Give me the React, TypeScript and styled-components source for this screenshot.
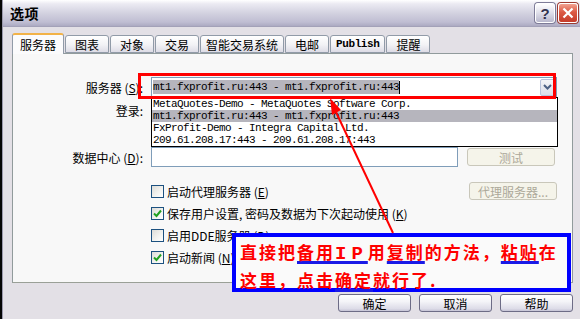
import React from 'react';
import styled, { createGlobalStyle } from 'styled-components';

const UI_FONT = `"Noto Sans CJK SC", "Liberation Sans", sans-serif`;
const MONO_FONT = `"Liberation Mono", "Noto Sans CJK SC", monospace`;

const GlobalStyle = createGlobalStyle`
  html, body {
    margin: 0;
    padding: 0;
    background: #050505;
  }
  body {
    width: 580px;
    height: 319px;
    overflow: hidden;
    font-family: ${UI_FONT};
    font-size: 12px;
    color: #000;
  }
  * { box-sizing: border-box; }
`;

const Stage = styled.div`
  position: relative;
  width: 580px;
  height: 319px;
  overflow: hidden;
`;

const Window = styled.div`
  margin-left: 2px;
  width: 578px;
  height: 319px;
  display: flex;
  flex-direction: column;
  background: #e3e0e6;
  border-left: 1px solid #9a98ac;
`;

const TitleBar = styled.div`
  height: 27px;
  flex-shrink: 0;
  display: flex;
  align-items: center;
  padding: 0 2px 0 7px;
  background: linear-gradient(180deg, #ffffff 0%, #ebeaf2 15%, #d3d2e0 50%, #bfbdd2 85%, #acaac2 100%);
  border-bottom: 1px solid #a3a1b8;
`;

const Title = styled.span`
  flex: 1;
  font-weight: 700;
  font-size: 14px;
  letter-spacing: 0.5px;
`;

const CaptionButton = styled.div<{ $close?: boolean }>`
  width: 20px;
  height: 20px;
  margin-left: 3px;
  border-radius: 3px;
  display: flex;
  align-items: center;
  justify-content: center;
  border: 1px solid #ffffff;
  box-shadow: 0 0 0 1px ${(p) => (p.$close ? '#9c3a30' : '#7e7c98')};
  background: ${(p) => (p.$close
    ? 'linear-gradient(180deg, #f2a291 0%, #dc5a44 45%, #c53b29 100%)'
    : 'linear-gradient(180deg, #ffffff 0%, #e2e2ec 45%, #b9b8cd 100%)')};
  color: #33334f;
  font: bold 15px "Liberation Sans", sans-serif;
`;

const Body = styled.div`
  flex: 1;
  display: flex;
  flex-direction: column;
  padding: 6px 7px 0 9px;
`;

const TabStrip = styled.div`
  height: 20px;
  display: flex;
  align-items: flex-end;
  gap: 1px;
`;

const Tab = styled.div<{ $active?: boolean; $latin?: boolean }>`
  position: relative;
  z-index: ${(p) => (p.$active ? 2 : 1)};
  min-width: 44px;
  height: ${(p) => (p.$active ? 21 : 18)}px;
  margin-bottom: ${(p) => (p.$active ? -1 : 0)}px;
  padding: 0 ${(p) => (p.$active ? 7 : 5)}px;
  display: flex;
  align-items: center;
  justify-content: center;
  font-family: ${(p) => (p.$latin ? MONO_FONT : UI_FONT)};
  font-size: ${(p) => (p.$latin ? 11 : 12)}px;
  letter-spacing: ${(p) => (p.$latin ? '-0.4px' : '0')};
  font-weight: ${(p) => (p.$latin ? 700 : 400)};
  border: 1px solid #919ba8;
  border-bottom: ${(p) => (p.$active ? 'none' : '1px solid #919ba8')};
  border-top: ${(p) => (p.$active ? '2px solid #f2b247' : '1px solid #919ba8')};
  border-radius: 3px 3px 0 0;
  background: ${(p) => (p.$active
    ? '#fbfbfc'
    : 'linear-gradient(180deg, #ffffff 0%, #f2f2f5 55%, #dddce6 100%)')};
`;

const Panel = styled.div`
  height: 230px;
  border: 1px solid #919b9c;
  border-bottom-color: #9aa097;
  background: #f8f8f8;
  padding: 23px 15px 0 0;
  display: flex;
  flex-direction: column;
`;

const FormRow = styled.div<{ $gap?: number }>`
  display: grid;
  grid-template-columns: 130px 1fr;
  column-gap: 8px;
  align-items: center;
  margin-top: ${(p) => p.$gap ?? 0}px;
  height: 20px;
`;

const Label = styled.span`
  text-align: right;
  white-space: nowrap;
`;

const ComboWrap = styled.div`
  position: relative;
`;

const Combo = styled.div`
  height: 20px;
  border: 1px solid #7f9db9;
  background: #fff;
  display: flex;
  align-items: center;
  padding: 0 1px 0 1px;
`;

const ComboText = styled.span`
  flex: 1;
  display: flex;
  align-items: center;
  font-family: ${MONO_FONT};
  font-size: 11px;
  letter-spacing: -0.6px;
  white-space: nowrap;
`;

const Selection = styled.span`
  background: #b6b5bd;
  padding: 1px 0;
`;

const Caret = styled.span`
  width: 1px;
  height: 13px;
  background: #000;
`;

const DropButton = styled.div`
  width: 15px;
  height: 17px;
  border: 1px solid #b9c3dc;
  border-radius: 2px;
  background: linear-gradient(180deg, #f4f4f8 0%, #dcdde8 100%);
  display: flex;
  align-items: center;
  justify-content: center;
`;

const DropList = styled.div`
  position: absolute;
  top: 20px;
  left: 0;
  right: -1px;
  z-index: 5;
  border: 1px solid #000;
  background: #fff;
  font-family: ${MONO_FONT};
  font-size: 11px;
  letter-spacing: -0.6px;
`;

const DropItem = styled.div<{ $selected?: boolean }>`
  height: 12px;
  line-height: 12px;
  padding-left: 1px;
  white-space: nowrap;
  background: ${(p) => (p.$selected ? '#b6b5bd' : 'transparent')};
`;

const FieldLine = styled.div`
  display: flex;
  align-items: center;
  gap: 9px;
`;

const Field = styled.div<{ $width?: number }>`
  width: ${(p) => p.$width ?? 307}px;
  height: 20px;
  border: 1px solid #7f9db9;
  background: #fff;
`;

const SysButton = styled.div<{ $disabled?: boolean }>`
  width: ${(p) => (p.$disabled ? 88 : 73)}px;
  height: 18px;
  display: flex;
  align-items: center;
  justify-content: center;
  border-radius: 3px;
  white-space: nowrap;
  border: 1px solid ${(p) => (p.$disabled ? '#c9c7ba' : '#6d6c86')};
  color: ${(p) => (p.$disabled ? '#aca899' : '#000')};
  background: ${(p) => (p.$disabled
    ? '#f5f4ea'
    : 'linear-gradient(180deg, #ffffff 0%, #f4f4f8 40%, #dddce8 85%, #c6c4d6 100%)')};
`;

const Checks = styled.div`
  margin-top: 13px;
  padding-left: 138px;
  display: flex;
  flex-direction: column;
`;

const CheckRow = styled.div`
  height: 22px;
  display: flex;
  align-items: center;
  white-space: nowrap;
`;

const Box = styled.span`
  width: 13px;
  height: 13px;
  margin-right: 3px;
  flex-shrink: 0;
  border: 1px solid #1c5180;
  background: linear-gradient(135deg, #dcdcd7 0%, #f4f4f1 60%, #ffffff 100%);
  display: flex;
  align-items: center;
  justify-content: center;
`;

const Spacer = styled.span`
  flex: 1;
`;

const ButtonRow = styled.div`
  display: flex;
  justify-content: flex-end;
  gap: 8px;
  margin-top: 11px;
`;

const RedFrame = styled.div`
  position: absolute;
  left: 138px;
  top: 73px;
  width: 418px;
  height: 26px;
  border: 3px solid #ff0000;
  z-index: 6;
  pointer-events: none;
`;

const Callout = styled.div`
  position: absolute;
  left: 232px;
  top: 233px;
  width: 339px;
  height: 59px;
  z-index: 7;
  border: 4px solid #0000ff;
  background: #fafafa;
  padding: 2px 0 0 4px;
  color: #ff0000;
  font-family: ${UI_FONT};
  font-weight: 700;
  font-size: 17px;
  letter-spacing: 2px;
  line-height: 25px;
  white-space: nowrap;
`;

const Mark = styled.span`
  text-decoration: underline;
  text-decoration-color: #1a1ae6;
  text-decoration-thickness: 3px;
  text-underline-offset: 2px;
  text-decoration-skip-ink: none;
`;

const Latin = styled.span`
  font-family: ${MONO_FONT};
  font-size: 19px;
  letter-spacing: 5px;
`;

const ArrowLayer = styled.svg`
  position: absolute;
  left: 0;
  top: 0;
  z-index: 8;
  pointer-events: none;
`;

function CheckMark() {
  return (
    <svg width="9" height="9" viewBox="0 0 9 9">
      <path d="M1 4.5 L3.5 7 L8 1.5" fill="none" stroke="#21a121" strokeWidth="2" />
    </svg>
  );
}

function Check({ checked, children }: { checked?: boolean; children: React.ReactNode }) {
  return (
    <>
      <Box>{checked && <CheckMark />}</Box>
      <span>{children}</span>
    </>
  );
}

const tabs = ['服务器', '图表', '对象', '交易', '智能交易系统', '电邮', 'Publish', '提醒'];

const servers = [
  'MetaQuotes-Demo - MetaQuotes Software Corp.',
  'mt1.fxprofit.ru:443 - mt1.fxprofit.ru:443',
  'FxProfit-Demo - Integra Capital Ltd.',
  '209.61.208.17:443 - 209.61.208.17:443',
];

export default function App() {
  return (
    <Stage>
      <GlobalStyle />
      <Window>
        <TitleBar>
          <Title>选项</Title>
          <CaptionButton>?</CaptionButton>
          <CaptionButton $close>
            <svg width="12" height="12" viewBox="0 0 12 12">
              <path d="M1.5 1.5 L10.5 10.5 M10.5 1.5 L1.5 10.5" stroke="#fff" strokeWidth="2.2" />
            </svg>
          </CaptionButton>
        </TitleBar>
        <Body>
          <TabStrip>
            {tabs.map((t, i) => (
              <Tab key={t} $active={i === 0} $latin={t === 'Publish'}>{t}</Tab>
            ))}
          </TabStrip>
          <Panel>
            <FormRow>
              <Label>服务器 (<u>S</u>):</Label>
              <ComboWrap>
                <Combo>
                  <ComboText>
                    <Selection>mt1.fxprofit.ru:443 - mt1.fxprofit.ru:443</Selection>
                    <Caret />
                  </ComboText>
                  <DropButton>
                    <svg width="9" height="6" viewBox="0 0 9 6">
                      <path d="M1 1 L4.5 4.5 L8 1" fill="none" stroke="#4d6185" strokeWidth="2" />
                    </svg>
                  </DropButton>
                </Combo>
                <DropList>
                  {servers.map((s, i) => (
                    <DropItem key={s} $selected={i === 1}>{s}</DropItem>
                  ))}
                </DropList>
              </ComboWrap>
            </FormRow>
            <FormRow $gap={3}>
              <Label>登录:</Label>
              <Field />
            </FormRow>
            <FormRow $gap={27}>
              <Label>数据中心 (<u>D</u>):</Label>
              <FieldLine>
                <Field />
                <SysButton $disabled>测试</SysButton>
              </FieldLine>
            </FormRow>
            <Checks>
              <CheckRow>
                <Check>启动代理服务器 (<u>E</u>)</Check>
                <Spacer />
                <SysButton $disabled>代理服务器...</SysButton>
              </CheckRow>
              <CheckRow>
                <Check checked>保存用户设置, 密码及数据为下次起动使用 (<u>K</u>)</Check>
              </CheckRow>
              <CheckRow>
                <Check>启用DDE服务器 (<u>D</u>)</Check>
              </CheckRow>
              <CheckRow>
                <Check checked>启动新闻 (<u>N</u>)</Check>
              </CheckRow>
            </Checks>
          </Panel>
          <ButtonRow>
            <SysButton>确定</SysButton>
            <SysButton>取消</SysButton>
            <SysButton>帮助</SysButton>
          </ButtonRow>
        </Body>
      </Window>

      <RedFrame />
      <Callout>
        <div>
          直接把<Mark>备用<Latin>IP</Latin></Mark>用<Mark>复制</Mark>的方法，<Mark>粘贴</Mark>在
        </div>
        <div>
          这里，点击<Mark>确定</Mark>就行了.
        </div>
      </Callout>
      <ArrowLayer width="580" height="319" viewBox="0 0 580 319">
        <line x1="393" y1="233" x2="335" y2="110" stroke="#ff0000" strokeWidth="2" />
        <polygon points="330,98 341,110 332,115" fill="#ff0000" />
      </ArrowLayer>
    </Stage>
  );
}
